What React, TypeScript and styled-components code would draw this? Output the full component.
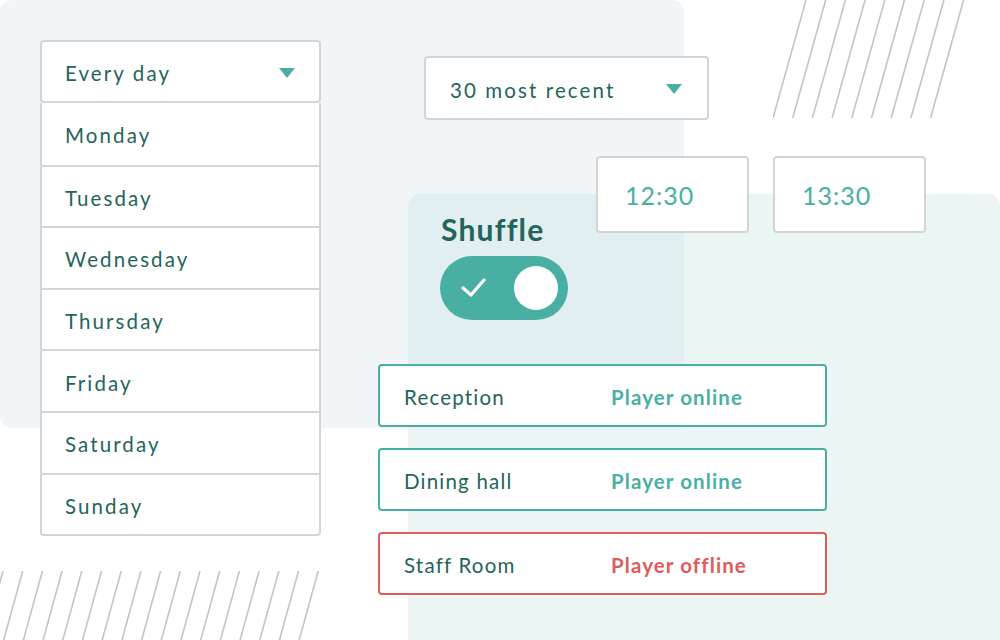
import styled, { createGlobalStyle } from 'styled-components'

const GlobalStyle = createGlobalStyle`
  html, body {
    margin: 0;
    padding: 0;
    background: #ffffff;
  }
  body {
    font-family: Lato, "Open Sans", sans-serif;
  }
`

const dark = '#24645b'
const teal = '#4aafa3'
const red = '#e05c5c'
const line = '#d3d4d5'

const days = ['Monday', 'Tuesday', 'Wednesday', 'Thursday', 'Friday', 'Saturday', 'Sunday']

const players = [
  { room: 'Reception', online: true },
  { room: 'Dining hall', online: true },
  { room: 'Staff Room', online: false },
]

const Hatch = ({ count, height, slant, gap }: { count: number; height: number; slant: number; gap: number }) => (
  <svg width={count * gap + slant} height={height} viewBox={`0 0 ${count * gap + slant} ${height}`}>
    {Array.from({ length: count }).map((_, i) => (
      <line
        key={i}
        x1={slant + i * gap}
        y1={0}
        x2={i * gap}
        y2={height}
        stroke="#c4c4c4"
        strokeWidth={1.6}
      />
    ))}
  </svg>
)

const Caret = () => (
  <svg width="16" height="11" viewBox="0 0 16 11">
    <path d="M0 0 H16 L8 10 Z" fill={teal} />
  </svg>
)

export default function App() {
  return (
    <>
      <GlobalStyle />
      <Stage>
        <GreyPanel />
        <TealPanel />
        <OverlapPanel />

        <TopHatch>
          <Hatch count={9} height={118} slant={33} gap={19.7} />
        </TopHatch>
        <BottomHatch>
          <Hatch count={17} height={80} slant={22} gap={19.7} />
        </BottomHatch>

        <DayList>
          <DayHeader>
            <DayLabel>Every day</DayLabel>
            <Caret />
          </DayHeader>
          <DayOptions>
            {days.map((d) => (
              <DayRow key={d}>
                <DayLabel>{d}</DayLabel>
              </DayRow>
            ))}
          </DayOptions>
        </DayList>

        <RecentSelect>
          <DayLabel>30 most recent</DayLabel>
          <Caret />
        </RecentSelect>

        <Times>
          <TimeBox>12:30</TimeBox>
          <TimeBox>13:30</TimeBox>
        </Times>

        <ShuffleBlock>
          <ShuffleTitle>Shuffle</ShuffleTitle>
          <Toggle>
            <svg width="26" height="20" viewBox="0 0 26 20">
              <path
                d="M2 10 L10 17 L23 2"
                fill="none"
                stroke="#ffffff"
                strokeWidth="3.2"
                strokeLinecap="round"
                strokeLinejoin="round"
              />
            </svg>
            <Knob />
          </Toggle>
        </ShuffleBlock>

        <PlayerList>
          {players.map((p) => (
            <PlayerRow key={p.room} $online={p.online}>
              <RoomName>{p.room}</RoomName>
              <PlayerStatus $online={p.online}>{p.online ? 'Player online' : 'Player offline'}</PlayerStatus>
            </PlayerRow>
          ))}
        </PlayerList>
      </Stage>
    </>
  )
}

const Stage = styled('div')`
  position: relative;
  width: 1000px;
  height: 640px;
  overflow: hidden;
  background: #ffffff;
`

const GreyPanel = styled('div')`
  position: absolute;
  left: 0;
  top: 0;
  width: 684px;
  height: 428px;
  background: #f2f5f8;
  border-radius: 12px;
`

const TealPanel = styled('div')`
  position: absolute;
  left: 408px;
  top: 194px;
  width: 592px;
  height: 470px;
  background: #ebf5f4;
  border-radius: 12px;
`

const OverlapPanel = styled('div')`
  position: absolute;
  left: 408px;
  top: 194px;
  width: 276px;
  height: 234px;
  background: #e2eff0;
  border-radius: 12px 0 0 0;
`

const TopHatch = styled('div')`
  position: absolute;
  left: 773px;
  top: 0;
  line-height: 0;
`

const BottomHatch = styled('div')`
  position: absolute;
  left: -19px;
  top: 571px;
  line-height: 0;
`

const DayList = styled('div')`
  position: absolute;
  left: 40px;
  top: 40px;
  width: 281px;
  display: flex;
  flex-direction: column;
`

const DayHeader = styled('div')`
  height: 63px;
  box-sizing: border-box;
  display: flex;
  align-items: center;
  justify-content: space-between;
  padding: 3px 24px 0 23px;
  background: #ffffff;
  border: 2px solid ${line};
  border-radius: 4px;
`

const DayOptions = styled('div')`
  display: flex;
  flex-direction: column;
  background: #ffffff;
  border: 2px solid ${line};
  border-top: none;
  border-radius: 0 0 4px 4px;
`

const DayRow = styled('div')`
  height: 61.6px;
  box-sizing: border-box;
  display: flex;
  align-items: center;
  padding: 3px 23px 0;
  & + & {
    border-top: 2px solid ${line};
  }
`

const DayLabel = styled('span')`
  font-family: Lato, sans-serif;
  font-size: 20.5px;
  letter-spacing: 2.1px;
  color: ${dark};
`

const RecentSelect = styled('div')`
  position: absolute;
  left: 424px;
  top: 56px;
  width: 285px;
  height: 64px;
  box-sizing: border-box;
  display: flex;
  align-items: center;
  justify-content: space-between;
  padding: 3px 25px 0 24px;
  background: #ffffff;
  border: 2px solid ${line};
  border-radius: 4px;
`

const Times = styled('div')`
  position: absolute;
  left: 596px;
  top: 156px;
  display: flex;
  gap: 24px;
`

const TimeBox = styled('div')`
  width: 153px;
  height: 77px;
  box-sizing: border-box;
  display: flex;
  align-items: center;
  padding-left: 27px;
  background: #ffffff;
  border: 2px solid ${line};
  border-radius: 4px;
  font-family: Lato, sans-serif;
  font-size: 25px;
  letter-spacing: 1px;
  color: ${teal};
`

const ShuffleBlock = styled('div')`
  position: absolute;
  left: 440px;
  top: 211px;
  display: flex;
  flex-direction: column;
  gap: 9px;
`

const ShuffleTitle = styled('div')`
  font-family: Lato, sans-serif;
  font-weight: 700;
  font-size: 30px;
  line-height: 36px;
  letter-spacing: 1.2px;
  color: ${dark};
  padding-left: 1px;
`

const Toggle = styled('div')`
  width: 128px;
  height: 64px;
  box-sizing: border-box;
  border-radius: 32px;
  background: ${teal};
  display: flex;
  align-items: center;
  justify-content: space-between;
  padding: 0 10px 0 21px;
`

const Knob = styled('div')`
  width: 44px;
  height: 44px;
  border-radius: 50%;
  background: #ffffff;
`

const PlayerList = styled('div')`
  position: absolute;
  left: 378px;
  top: 364px;
  width: 449px;
  display: flex;
  flex-direction: column;
  gap: 21px;
`

const PlayerRow = styled('div')<{ $online: boolean }>`
  height: 63px;
  box-sizing: border-box;
  display: grid;
  grid-template-columns: 207px 1fr;
  align-items: center;
  padding: 3px 0 0 24px;
  background: #ffffff;
  border: 2px solid ${(p) => (p.$online ? teal : red)};
  border-radius: 4px;
`

const RoomName = styled('span')`
  font-family: Lato, sans-serif;
  font-size: 20.5px;
  letter-spacing: 1.2px;
  color: ${dark};
`

const PlayerStatus = styled('span')<{ $online: boolean }>`
  font-family: Lato, sans-serif;
  font-weight: 700;
  font-size: 20.5px;
  letter-spacing: 1.1px;
  color: ${(p) => (p.$online ? teal : red)};
`
